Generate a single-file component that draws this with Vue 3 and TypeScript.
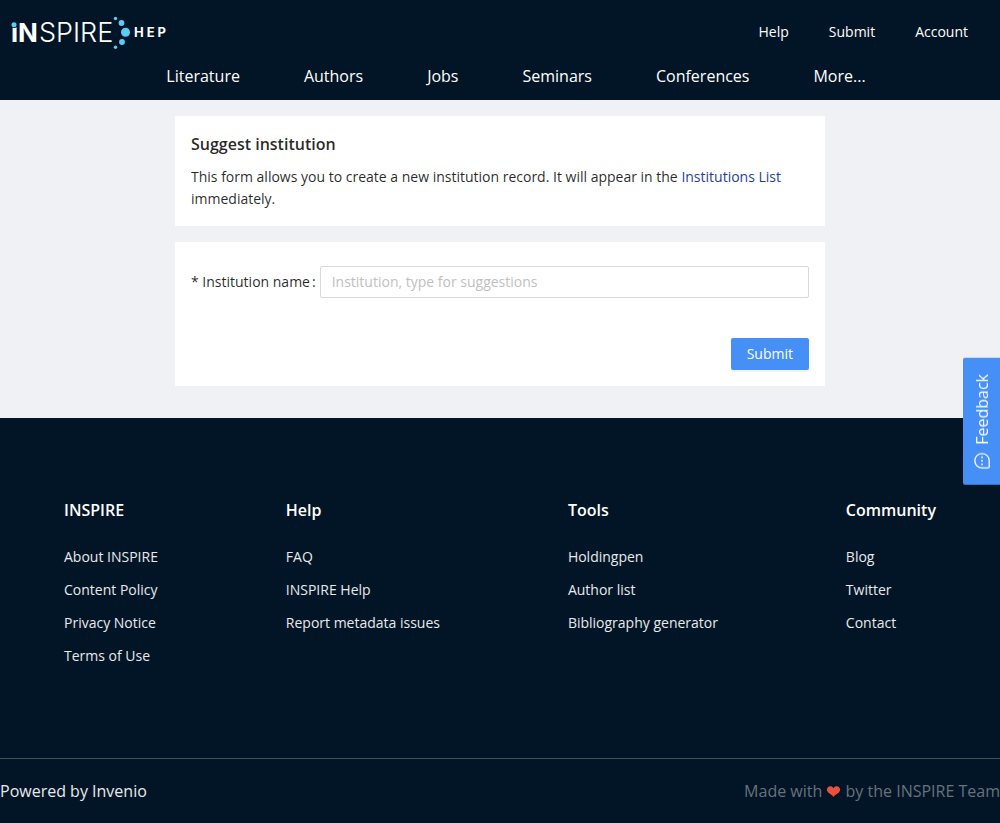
<script setup lang="ts">
import { ref } from 'vue'

interface FooterColumn {
  title: string
  links: string[]
}

const accountLinks: string[] = ['Help', 'Submit', 'Account']
const collections: string[] = ['Literature', 'Authors', 'Jobs', 'Seminars', 'Conferences']
const footerColumns: FooterColumn[] = [
  { title: 'INSPIRE', links: ['About INSPIRE', 'Content Policy', 'Privacy Notice', 'Terms of Use'] },
  { title: 'Help', links: ['FAQ', 'INSPIRE Help', 'Report metadata issues'] },
  { title: 'Tools', links: ['Holdingpen', 'Author list', 'Bibliography generator'] },
  { title: 'Community', links: ['Blog', 'Twitter', 'Contact'] },
]
const institution = ref('')
</script>

<template>
  <div class="page">
    <header class="header">
      <div class="topbar">
        <a class="logo" href="#" aria-label="INSPIRE HEP">
          <svg width="160" height="36" viewBox="0 0 160 36">
            <text class="logo-bold" x="1" y="28">iN</text>
            <circle cx="4" cy="10" r="4" class="logo-back" />
            <circle cx="4" cy="10.800" r="2.500" class="logo-dot" />
            <text class="logo-light" x="29" y="28">SPIRE</text>
            <circle cx="105.500" cy="4.500" r="1.700" class="logo-dot" />
            <circle cx="111.500" cy="9" r="2.900" class="logo-dot" />
            <circle cx="115.500" cy="18.200" r="4.500" class="logo-dot" />
            <circle cx="112" cy="28" r="2.900" class="logo-dot" />
            <circle cx="105.500" cy="33.300" r="1.700" class="logo-dot" />
            <text class="logo-small" x="124" y="23">HEP</text>
          </svg>
        </a>
        <nav class="account" aria-label="Account">
          <a v-for="item in accountLinks" :key="item" href="#">{{ item }}</a>
        </nav>
      </div>
      <nav class="collections" aria-label="Collections">
        <a v-for="item in collections" :key="item" href="#">{{ item }}</a>
        <button type="button">More...</button>
      </nav>
    </header>

    <main class="main">
      <section class="card intro">
        <h1>Suggest institution</h1>
        <p>
          This form allows you to create a new institution record. It will appear in the
          <a href="#">Institutions List</a> immediately.
        </p>
      </section>
      <form class="card form" @submit.prevent>
        <div class="field">
          <label for="institution">* Institution name<span class="colon">:</span></label>
          <input id="institution" v-model="institution" type="text" placeholder="Institution, type for suggestions" />
        </div>
        <button class="submit" type="submit">Submit</button>
      </form>
    </main>

    <footer class="footer">
      <div class="columns">
        <section v-for="column in footerColumns" :key="column.title">
          <h2>{{ column.title }}</h2>
          <ul>
            <li v-for="link in column.links" :key="link"><a href="#">{{ link }}</a></li>
          </ul>
        </section>
      </div>
      <div class="credits">
        <a href="#">Powered by Invenio</a>
        <span class="made">
          Made with
          <svg class="heart" width="15" height="11" viewBox="0 0 16 12" role="img" aria-label="love">
            <path d="M8 2.400C6.800.2 3.600-.2 1.900 1.300.2 2.900.5 5.500 2.200 7.200 4 9 6.500 9.800 8 12c1.500-2.200 4-3 5.800-4.800 1.700-1.700 2-4.300.3-5.900C12.400-.2 9.200.2 8 2.400z" />
          </svg>
          by the INSPIRE Team
        </span>
      </div>
    </footer>

    <button class="feedback" type="button">
      <svg width="16" height="16" viewBox="0 0 16 16">
        <path d="M8 .8A7.200 7.200 0 1 1 .8 8V2Q.8.8 2 .8z" />
        <circle cx="8" cy="4.500" r="0.900" />
        <circle cx="8" cy="8" r="0.900" />
        <circle cx="8" cy="11.500" r="0.900" />
      </svg>
      <span>Feedback</span>
    </button>
  </div>
</template>

<style>
body {
  margin: 0;
  background: #021526;
}
</style>

<style scoped>
.page {
  min-height: 100vh;
  display: flex;
  flex-direction: column;
  background: #f0f1f5;
  color: rgba(0, 0, 0, 0.85);
  font-family: "Open Sans", "Noto Sans", sans-serif;
  font-size: 14px;
  line-height: 22px;
}
a {
  color: inherit;
  text-decoration: none;
}
button,
input {
  font: inherit;
}
button {
  border: 0;
  cursor: pointer;
}
.header {
  background: #021526;
  color: #fff;
}
.topbar {
  display: flex;
  align-items: center;
  justify-content: space-between;
  height: 64px;
  padding: 0 32px 0 10px;
}
.logo {
  display: flex;
}
.logo-bold,
.logo-light,
.logo-small {
  fill: #fff;
  font-family: Inter, sans-serif;
  font-size: 26px;
}
.logo-bold {
  font-weight: 700;
}
.logo-light {
  font-size: 27px;
  font-weight: 300;
}
.logo-small {
  font-size: 13px;
  font-weight: 700;
  letter-spacing: 3px;
}
.logo-dot {
  fill: #5bcbf8;
}
.logo-back {
  fill: #021526;
}
.account {
  display: flex;
  gap: 40px;
}
.collections {
  display: flex;
  justify-content: center;
  gap: 64px;
  padding: 0 0 12px 32px;
  font-size: 16px;
  line-height: 24px;
}
.collections button {
  padding: 0;
  background: none;
  color: inherit;
}
.main {
  display: flex;
  flex-direction: column;
  gap: 16px;
  width: 65%;
  margin: 0 auto;
  padding: 16px 0 32px;
}
.card {
  padding: 16px;
  background: #fff;
}
h1 {
  margin: 0 0 10px;
  font-size: 16px;
  line-height: 24px;
  font-weight: 600;
}
.intro p {
  margin: 0;
}
.intro a {
  color: #1f419b;
}
.form {
  display: flex;
  flex-direction: column;
  gap: 40px;
  padding-top: 24px;
}
.field {
  display: flex;
  align-items: center;
  gap: 4px;
}
.colon {
  margin-left: 2px;
}
.field input {
  flex: 1;
  min-width: 0;
  height: 32px;
  box-sizing: border-box;
  padding: 3px 11px 5px;
  border: 1px solid #d9d9d9;
  border-radius: 2px;
  background: #fff;
  color: inherit;
}
.field input::placeholder {
  color: #bfbfbf;
}
.submit {
  align-self: flex-end;
  height: 32px;
  padding: 0 16px;
  border-radius: 2px;
  background: #458ff6;
  color: #fff;
  box-shadow: 0 2px 0 rgba(0, 0, 0, 0.045);
}
.footer {
  flex: 1;
  background: #021526;
  color: #e8eaec;
}
.columns {
  display: flex;
  justify-content: space-between;
  padding: 80px 64px 91px;
}
h2 {
  margin: 0 0 24px;
  color: #fff;
  font-size: 16px;
  line-height: 24px;
  font-weight: 600;
}
ul {
  display: grid;
  gap: 11px;
  margin: 0;
  padding: 0;
  list-style: none;
}
.credits {
  display: flex;
  justify-content: space-between;
  padding: 20px 0;
  border-top: 1px solid #435056;
  font-size: 16px;
  line-height: 24px;
}
.made {
  color: #67727c;
}
.heart {
  fill: #ee4f3c;
}
.feedback {
  position: fixed;
  right: 0;
  top: 358px;
  display: flex;
  align-items: center;
  gap: 8px;
  padding: 16px 7px 16px 5px;
  border-radius: 0 2px 2px 0;
  background: #458ff6;
  color: #fff;
  font-size: 16px;
  line-height: 25px;
  writing-mode: vertical-rl;
  transform: rotate(180deg);
}
.feedback path {
  fill: none;
  stroke: #fff;
  stroke-width: 1.3;
}
.feedback circle {
  fill: #fff;
}
</style>
